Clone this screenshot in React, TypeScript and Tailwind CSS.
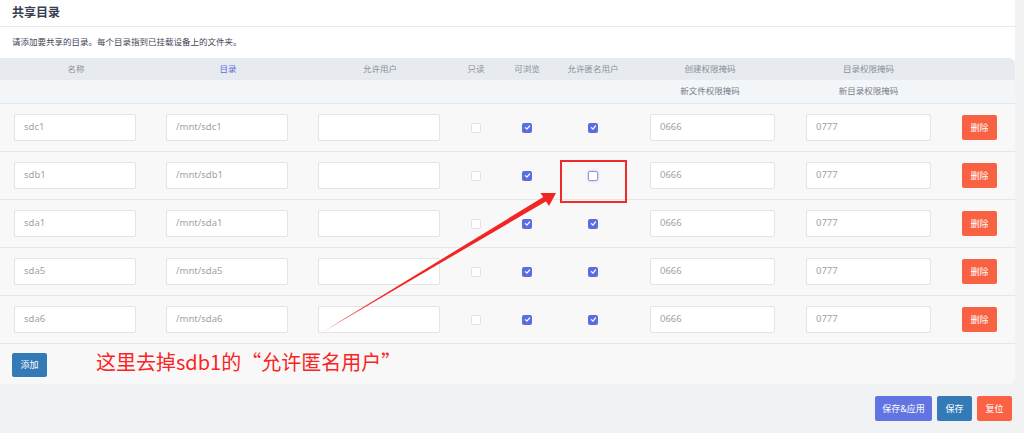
import type { ReactNode } from "react";

type Share = {
  name: string;
  path: string;
  browsable: boolean;
  guest: boolean;
};

const shares: Share[] = [
  { name: "sdc1", path: "/mnt/sdc1", browsable: true, guest: true },
  { name: "sdb1", path: "/mnt/sdb1", browsable: true, guest: false },
  { name: "sda1", path: "/mnt/sda1", browsable: true, guest: true },
  { name: "sda5", path: "/mnt/sda5", browsable: true, guest: true },
  { name: "sda6", path: "/mnt/sda6", browsable: true, guest: true },
];

const cols = "grid grid-cols-[152px_152px_152px_40px_62px_70px_164px_153px_1fr]";

function Field({ value, w }: { value?: string; w: string }) {
  return (
    <div
      className={`${w} h-[27px] flex items-center px-[9px] bg-white border border-[#e4e4e4] rounded-[2px] text-[9.5px] text-[#a0a3a8]`}
    >
      {value}
    </div>
  );
}

function Check({ checked, focus }: { checked: boolean; focus?: boolean }) {
  if (checked) {
    return (
      <span className="w-[10px] h-[10px] rounded-[2px] bg-[#5b6ee1] flex items-center justify-center">
        <svg width="7" height="7" viewBox="0 0 10 10">
          <path d="M2 5.2 L4.2 7.3 L8 2.8" stroke="white" strokeWidth="1.8" fill="none" strokeLinecap="round" strokeLinejoin="round" />
        </svg>
      </span>
    );
  }
  return (
    <span
      className={
        focus
          ? "w-[10px] h-[10px] rounded-[2px] bg-white border border-[#8b96e8] shadow-[0_0_3px_rgba(91,110,225,0.45)]"
          : "w-[10px] h-[10px] rounded-[2px] bg-white border border-[#e2e2e2]"
      }
    />
  );
}

function Cell({ children, className = "" }: { children?: ReactNode; className?: string }) {
  return <div className={`flex items-center ${className}`}>{children}</div>;
}

export default function App() {
  return (
    <div
      className="relative w-[1024px] h-[433px] overflow-hidden bg-[#f1f2f4]"
      style={{ fontFamily: '"Noto Sans", "Noto Sans CJK SC", sans-serif' }}
    >
      <div className="w-[1015px] bg-white rounded-br-md">
        {/* title */}
        <div className="h-[27px] px-3 flex items-center border-b border-[#e9e9e9]">
          <h3 className="text-[12px] font-bold text-[#383d4f]">共享目录</h3>
        </div>
        <div className="h-[31px] px-3 flex items-center text-[8.5px] text-[#3f4555]">
          请添加要共享的目录。每个目录指到已挂载设备上的文件夹。
        </div>

        {/* table head */}
        <div className={`${cols} h-[22px] bg-[#e7eaee] rounded-tr-md text-[8.5px] text-[#8a909b]`}>
          <Cell className="justify-center">名称</Cell>
          <Cell className="justify-center text-[#5b6ee1]">目录</Cell>
          <Cell className="justify-center">允许用户</Cell>
          <Cell className="justify-center">只读</Cell>
          <Cell className="justify-center">可浏览</Cell>
          <Cell className="justify-center">允许匿名用户</Cell>
          <Cell className="justify-center">创建权限掩码</Cell>
          <Cell className="justify-center">目录权限掩码</Cell>
          <Cell />
        </div>
        <div className={`${cols} h-[24px] bg-[#f3f6f9] border-b border-[#e4e6ea] text-[8.5px] text-[#767c88]`}>
          <Cell />
          <Cell />
          <Cell />
          <Cell />
          <Cell />
          <Cell />
          <Cell className="justify-center">新文件权限掩码</Cell>
          <Cell className="justify-center">新目录权限掩码</Cell>
          <Cell />
        </div>

        {/* rows */}
        <div className="bg-[#f8f8f8] rounded-br-md">
          {shares.map((s, i) => (
            <div key={s.name} className={`${cols} h-[48px] border-b border-[#e6e6e6]`}>
              <Cell className="pl-[14px]">
                <Field value={s.name} w="w-[122px]" />
              </Cell>
              <Cell className="pl-[14px]">
                <Field value={s.path} w="w-[122px]" />
              </Cell>
              <Cell className="pl-[14px]">
                <Field w="w-[122px]" />
              </Cell>
              <Cell className="justify-center">
                <Check checked={false} />
              </Cell>
              <Cell className="justify-center">
                <Check checked={s.browsable} />
              </Cell>
              <Cell className="justify-center">
                <Check checked={s.guest} focus={i === 1} />
              </Cell>
              <Cell className="pl-[22px]">
                <Field value="0666" w="w-[125px]" />
              </Cell>
              <Cell className="pl-[14px]">
                <Field value="0777" w="w-[125px]" />
              </Cell>
              <Cell className="pl-[17px]">
                <button className="w-[35px] h-[25px] rounded-[2px] bg-[#f86141] text-white text-[9px]">删除</button>
              </Cell>
            </div>
          ))}
          <div className="px-3 pt-[6px] pb-[7px]">
            <button className="w-[35px] h-[24px] rounded-[2px] bg-[#337ab7] text-white text-[9px]">添加</button>
          </div>
        </div>
      </div>

      {/* footer buttons */}
      <div className="flex justify-end gap-[5px] pr-[12px] pt-[12px]">
        <button className="w-[57px] h-[25px] rounded-[2px] bg-[#6174e1] text-white text-[9px]">保存&amp;应用</button>
        <button className="w-[35px] h-[25px] rounded-[2px] bg-[#337ab7] text-white text-[9px]">保存</button>
        <button className="w-[35px] h-[25px] rounded-[2px] bg-[#fa6243] text-white text-[9px]">复位</button>
      </div>

      {/* annotation overlay */}
      <div className="absolute left-[560px] top-[160px] w-[67px] h-[43px] border-2 border-[#f02a2a]" />
      <svg className="absolute left-0 top-0 pointer-events-none" width="1024" height="433">
        <polygon points="322.5,332 545,196 547.5,200.5" fill="#f22525" />
        <polygon points="556,193 540.5,193 549,206" fill="#f22525" />
      </svg>
      <div className="absolute left-[96px] top-[348px] text-[20px] leading-[28px] text-[#fb2424]" style={{ fontFamily: '"Noto Sans CJK SC", sans-serif' }}>
        这里去掉sdb1的“允许匿名用户”
      </div>
    </div>
  );
}
